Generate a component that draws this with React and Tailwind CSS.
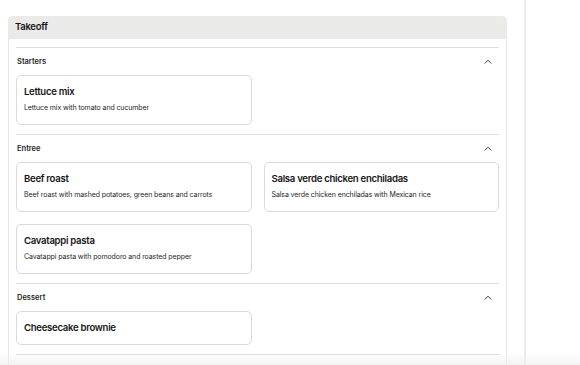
import React from "react";

// ─── Data ─────────────────────────────────────────────────────────────────────
const sections = [
  {
    name: "Starters",
    items: [{ title: "Lettuce mix", desc: "Lettuce mix with tomato and cucumber" }],
  },
  {
    name: "Entree",
    items: [
      { title: "Beef roast", desc: "Beef roast with mashed potatoes, green beans and carrots" },
      { title: "Salsa verde chicken enchiladas", desc: "Salsa verde chicken enchiladas with Mexican rice" },
      { title: "Cavatappi pasta", desc: "Cavatappi pasta with pomodoro and roasted pepper" },
    ],
  },
  {
    name: "Dessert",
    items: [{ title: "Cheesecake brownie" }],
  },
];

function ChevronUp() {
  return (
    <svg width="8" height="5" viewBox="0 0 8 5" fill="none">
      <path d="M1 4.2 L4 1.2 L7 4.2" stroke="#35337a" strokeWidth="1" strokeLinecap="round" strokeLinejoin="round" />
    </svg>
  );
}

// ─── Menu card ────────────────────────────────────────────────────────────────
function ItemCard({ title, desc }) {
  return (
    <div
      className={`border border-[#d9d9d9] rounded-[5px] bg-white px-[7px] ${
        desc ? "pt-[10px] pb-[11px]" : "py-[10px]"
      }`}
    >
      <p className="text-[9.6px] leading-[12px] font-semibold text-[#161616] tracking-[-0.3px]">{title}</p>
      {desc && (
        <p className="mt-[5px] text-[7px] leading-[10px] text-[#1f1f1f] tracking-[-0.1px]">{desc}</p>
      )}
    </div>
  );
}

// ─── Section ──────────────────────────────────────────────────────────────────
function Section({ name, items }) {
  return (
    <div className="border-t border-[#dedede] pb-[9px]">
      <div className="h-[27px] flex items-center justify-between pl-[1px] pr-[7px]">
        <span className="text-[7.5px] font-semibold text-[#1f1f1f]">{name}</span>
        <ChevronUp />
      </div>
      <div className="grid grid-cols-2 gap-3">
        {items.map((it) => (
          <ItemCard key={it.title} {...it} />
        ))}
      </div>
    </div>
  );
}

export default function App() {
  return (
    <div
      className="relative flex h-[365px] w-[580px] overflow-hidden bg-white"
      style={{ fontFamily: "Inter, 'Noto Sans', sans-serif" }}
    >
      <div className="w-[524px] flex-shrink-0 pt-4 pl-2">
        <div className="w-[499px]">
          <div className="h-[23px] bg-[#eaeae8] rounded-t-[5px] px-[7px] flex items-center">
            <span className="text-[9.5px] font-semibold text-[#161616] tracking-[-0.3px]">Takeoff</span>
          </div>
          <div className="border-x border-[#e6e6e6] px-[7px] pt-2 pb-10">
            {sections.map((s) => (
              <Section key={s.name} {...s} />
            ))}
            <div className="border-t border-[#dedede]" />
          </div>
        </div>
      </div>
      <div className="w-[2px] bg-[#ececec] h-full" />
      <div className="flex-1" />
      <div className="pointer-events-none absolute bottom-0 left-0 right-0 h-[12px] bg-gradient-to-b from-transparent to-[#eeeeee]/70" />
    </div>
  );
}
